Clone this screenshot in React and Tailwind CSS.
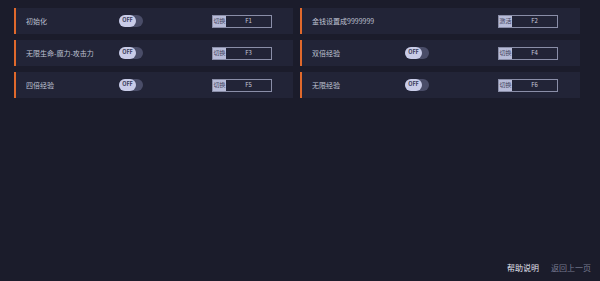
import React from "react";

const rows = [
  [
    { name: "初始化", toggle: true, action: "切换", key: "F1" },
    { name: "金钱设置成9999999", toggle: false, action: "激活", key: "F2" },
  ],
  [
    { name: "无限生命-魔力-攻击力", toggle: true, action: "切换", key: "F3" },
    { name: "双倍经验", toggle: true, action: "切换", key: "F4" },
  ],
  [
    { name: "四倍经验", toggle: true, action: "切换", key: "F5" },
    { name: "无限经验", toggle: true, action: "切换", key: "F6" },
  ],
];

const Toggle = () => (
  <div className="flex h-[12px] w-[24px] items-center rounded-full bg-[#4a4d68]">
    <div className="flex h-[12px] w-[17px] items-center justify-center rounded-full bg-[#c9cce8] text-[5.5px] font-bold leading-none text-[#3a3d58]">
      OFF
    </div>
  </div>
);

const HotKey = ({ action, hotkey }) => (
  <div className="flex h-[13px] w-[60px] items-stretch border border-[#8a8ea8]">
    <div className="flex w-[13px] items-center justify-center bg-[#b7bbd8] text-[6px] leading-none text-[#3b3e5a]">
      {action}
    </div>
    <div className="flex flex-1 items-center justify-center text-[6px] leading-none text-[#c6c9da]">
      {hotkey}
    </div>
  </div>
);

const Cheat = ({ item, wide }) => (
  <div
    className={`flex h-[26px] items-center border-l-2 border-[#e0692c] bg-[#222437] pl-[10px] ${
      wide ? "w-[280px]" : "w-[279px]"
    }`}
  >
    <div className="w-[93px] text-[7px] leading-none text-[#bfc2d2]">{item.name}</div>
    <div className="w-[93px]">{item.toggle && <Toggle />}</div>
    <HotKey action={item.action} hotkey={item.key} />
  </div>
);

export default function App() {
  return (
    <div
      className="flex h-[281px] w-[600px] flex-col bg-[#1b1c2b]"
      style={{ fontFamily: '"Noto Sans CJK SC", "Noto Sans", sans-serif' }}
    >
      <div className="flex flex-col gap-[6px] pl-[14px] pt-[8px]">
        {rows.map((row, i) => (
          <div key={i} className="flex gap-[7px]">
            <Cheat item={row[0]} />
            <Cheat item={row[1]} wide />
          </div>
        ))}
      </div>
      <div className="mt-auto flex justify-end gap-[12px] pb-[9px] pr-[9px] text-[8px] leading-none">
        <span className="text-[#e2e4ef]">帮助说明</span>
        <span className="text-[#767a90]">返回上一页</span>
      </div>
    </div>
  );
}
